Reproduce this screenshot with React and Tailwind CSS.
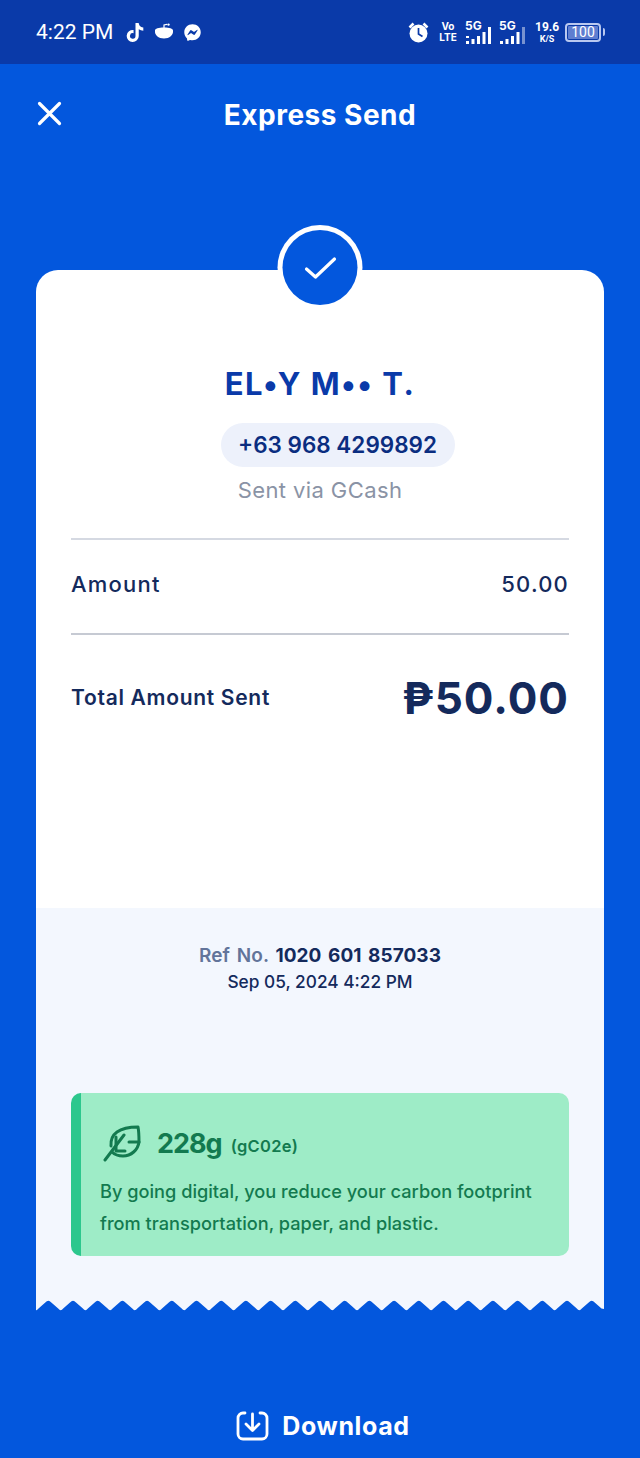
import React from "react";
import { FaTiktok, FaFacebookMessenger } from "react-icons/fa";

const P = 568 / 23;
let d = "M0 0 H568 V9 ";
for (let i = 23; i > 0; i--) {
  const r = i * P;
  const m = r - P / 2;
  const l = r - P;
  if (i < 23) d += `Q${r.toFixed(1)} 12 ${(r - 2.5).toFixed(1)} 8.500 `;
  else d += `L${(r - 2.5).toFixed(1)} 8.500 `;
  d += `L${(m + 3).toFixed(1)} 2.500 Q${m.toFixed(1)} -0.800 ${(m - 3).toFixed(1)} 2.500 `;
  d += `L${(l + 2.5).toFixed(1)} 8.500 `;
}
d += "Q0.500 11 0 10 Z";

function Bars({ dim, dotted }) {
  const hs = [3, 5, 8, 12, 17];
  return (
    <svg width="27" height="17" viewBox="0 0 27 17" fill="white">
      {hs.map((h, i) => (
        <rect key={i} x={i * 5.500 + 1} y={17 - h} width="3" height={h} opacity={dim && i === 4 ? 0.45 : 1} />
      ))}
      {dotted && <rect x="1" y="9" width="3" height="2" />}
    </svg>
  );
}

function Net({ dim, dotted }) {
  return (
    <div className="relative w-[28px] h-[24px]">
      <span className="absolute left-0 top-0 text-[12px] leading-[12px] font-bold text-white">5G</span>
      <div className="absolute left-0 bottom-0">
        <Bars dim={dim} dotted={dotted} />
      </div>
    </div>
  );
}

export default function App() {
  return (
    <div className="w-[640px] h-[1458px] bg-[#0357dd] flex flex-col overflow-hidden font-['Inter',sans-serif]">
      <div className="h-16 shrink-0 bg-[#0a3aa9] flex items-center justify-between pl-9 pr-[35px] text-white">
        <div className="flex items-center">
          <span className="text-[21px] leading-none font-['Roboto',sans-serif]">4:22 PM</span>
          <FaTiktok className="ml-[13px] w-[18px] h-[19px]" />
          <svg className="ml-[10px]" width="20" height="18" viewBox="0 0 20 18" fill="white">
            <path d="M1 7.500C1 5.500 4.500 4.500 10 4.500s9 1 9 3c.6 4.500-3.500 8-9 8s-9.600-3.500-9-8z" />
            <path d="M10 5V2l3-.6" stroke="white" strokeWidth="1.200" fill="none" />
            <circle cx="14.500" cy="1.600" r="1.200" />
          </svg>
          <FaFacebookMessenger className="ml-[10px] w-[17px] h-[17px]" />
        </div>
        <div className="flex items-center">
          <svg width="21" height="21" viewBox="0 0 21 21" className="mr-[10px]">
            <path d="M1.500 5.500l4-4M19.500 5.500l-4-4" stroke="white" strokeWidth="2.500" />
            <circle cx="10.500" cy="11.500" r="9" fill="white" />
            <path d="M10.500 6v6l4 2.500" stroke="#0a3aa9" strokeWidth="1.700" fill="none" />
          </svg>
          <div className="w-[18px] text-[10px] leading-[11px] font-bold text-center mr-[8px]">
            <div>Vo</div>
            <div>LTE</div>
          </div>
          <div className="mr-[6px]">
            <Net dotted />
          </div>
          <div className="mr-[8px]">
            <Net dim />
          </div>
          <div className="w-[24px] text-center font-bold mr-[6px] font-['Roboto',sans-serif]">
            <div className="text-[12px] leading-[13px]">19.6</div>
            <div className="text-[9px] leading-[10px]">K/S</div>
          </div>
          <div className="w-[36px] h-[19px] border-2 border-[#b9c8f0] rounded-[4px] p-[1px]">
            <div className="h-full bg-[#5f7ed0] rounded-[1px] flex items-center justify-center text-[14px] leading-none font-['Roboto',sans-serif]">
              100
            </div>
          </div>
          <div className="w-[2px] h-[8px] bg-[#b9c8f0] ml-[2px] rounded-r-sm" />
        </div>
      </div>

      <div className="h-[100px] shrink-0 relative flex items-center justify-center">
        <svg className="absolute left-[36px] top-[36px]" width="27" height="27" viewBox="0 0 27 27" fill="none" stroke="white" strokeWidth="3.200" strokeLinecap="round">
          <path d="M3.500 3.500l20 20M23.500 3.500l-20 20" />
        </svg>
        <h1 className="text-[28px] leading-none font-bold text-white tracking-[0.500px] pt-[1px]">Express Send</h1>
      </div>

      <div className="mt-[106px] mx-9 relative">
        <div className="absolute left-1/2 -translate-x-1/2 -top-[45px] w-[85px] h-[85px] rounded-full bg-white flex items-center justify-center z-10">
          <div className="w-[75px] h-[75px] rounded-full bg-[#0357dd] flex items-center justify-center">
            <svg width="32" height="24" viewBox="0 0 32 24" fill="none" stroke="white" strokeWidth="3.200" strokeLinecap="round" strokeLinejoin="round">
              <path d="M2 13l9 8L30 3" />
            </svg>
          </div>
        </div>

        <div className="h-[638px] bg-white rounded-t-[22px] px-[35px] flex flex-col">
          <div className="flex flex-col items-center pt-[96px]">
            <div className="text-[31px] leading-[36px] font-bold text-[#0a3aa9] tracking-[1.500px]">EL•Y M•• T.</div>
            <div className="mt-[21px] ml-[35px] h-[44px] w-[234px] rounded-full bg-[#edf1fb] flex items-center justify-center text-[22.500px] font-semibold text-[#0a2d80] leading-none">
              +63 968 4299892
            </div>
            <div className="mt-[10px] text-[22px] leading-[26px] text-[#8a93a5] tracking-[0.400px]">Sent via GCash</div>
          </div>
          <div className="mt-[35px] h-[2px] bg-[#d5d9e2]" />
          <div className="h-[93px] pb-[4px] flex items-center justify-between text-[22px] text-[#142a5c] font-medium tracking-[1.200px]">
            <span>Amount</span>
            <span>50.00</span>
          </div>
          <div className="h-[2px] bg-[#c6cad3]" />
          <div className="h-[126px] pb-[1px] flex items-center justify-between text-[#142a5c] font-bold">
            <span className="text-[21px] font-semibold tracking-[0.700px]">Total Amount Sent</span>
            <span className="text-[44px] leading-none tracking-[1px]">₱50.00</span>
          </div>
        </div>

        <div className="h-[392px] bg-[#f3f7fe] px-[35px] flex flex-col">
          <div className="pt-[35px] text-center text-[#142a5c] font-medium">
            <div className="text-[19px] leading-[26px] tracking-[0.050px] [word-spacing:2px]">
              <span className="text-[#62749a] font-semibold">Ref No. </span>
              <span className="font-bold">1020 601 857033</span>
            </div>
            <div className="text-[17.300px] leading-[26px]">Sep 05, 2024 4:22 PM</div>
          </div>
          <div className="mt-[98px] h-[163px] w-[498px] rounded-[10px] overflow-hidden bg-[#9eecc7] border-l-[10px] border-[#2cc78d] text-[#137a4f] pl-[19px] pt-[30px]">
            <div className="flex items-center h-[40px]">
              <svg width="38" height="38" viewBox="0 0 38 38" fill="none" stroke="#137a4f" strokeWidth="3" strokeLinecap="round" strokeLinejoin="round" className="ml-[3px]">
                <path d="M2 36l19-25" />
                <path d="M8 22C7 10 16 3 35 3c1 5 1 10 1 15-1 8-8 14-16 14-4 0-8-1-11-4" />
                <path d="M13 13v14M13 27h9M26 18h10" />
              </svg>
              <span className="ml-[16px] text-[27px] leading-none font-bold tracking-[-1px]">228g</span>
              <span className="ml-[9px] mt-[7px] text-[16.500px] leading-none font-semibold tracking-[0.300px]">(gC02e)</span>
            </div>
            <div className="mt-[12px] text-[18.200px] leading-[32px] font-medium whitespace-nowrap">
              <div>By going digital, you reduce your carbon footprint</div>
              <div>from transportation, paper, and plastic.</div>
            </div>
          </div>
        </div>
        <svg width="568" height="12" viewBox="0 0 568 12" className="block">
          <path d={d} fill="#f3f7fe" />
        </svg>
      </div>

      <div className="mt-[99px] ml-[6px] flex items-center justify-center text-white">
        <svg width="33" height="30" viewBox="0 0 33 30" fill="none" stroke="white" strokeWidth="2.800" strokeLinecap="round" strokeLinejoin="round">
          <path d="M9 2H7a5 5 0 0 0-5 5v16a5 5 0 0 0 5 5h19a5 5 0 0 0 5-5V7a5 5 0 0 0-5-5h-2" />
          <path d="M16.500 3v16M10 13l6.500 6.500L23 13" />
        </svg>
        <span className="ml-[13px] text-[25px] leading-none font-bold tracking-[0.600px]">Download</span>
      </div>
    </div>
  );
}
